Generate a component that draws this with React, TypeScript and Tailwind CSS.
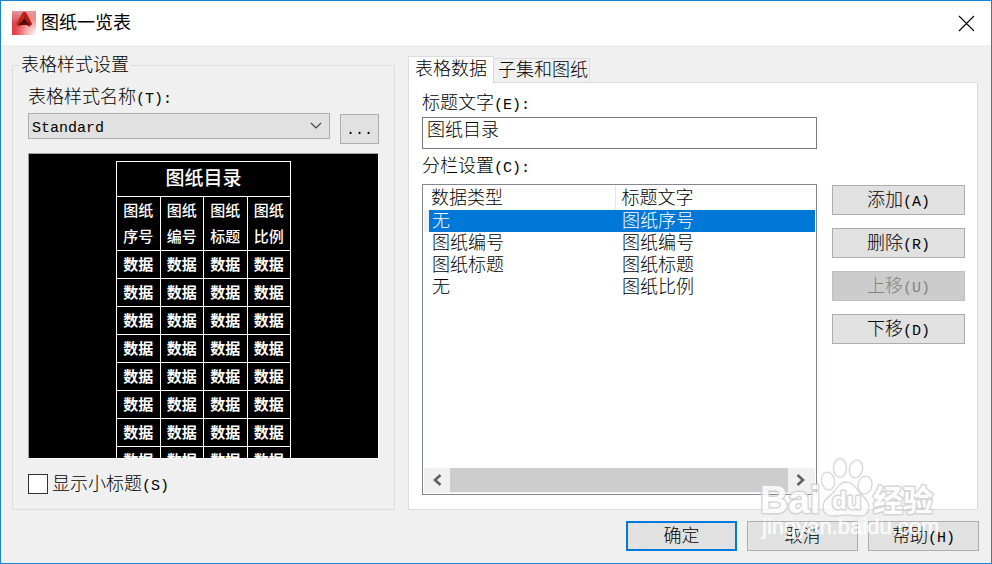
import { useState } from "react";
import clsx from "clsx";

const rows = [
  { id: 1, type: "无", title: "图纸序号" },
  { id: 2, type: "图纸编号", title: "图纸编号" },
  { id: 3, type: "图纸标题", title: "图纸标题" },
  { id: 4, type: "无", title: "图纸比例" },
];

const previewHeads = ["序号", "编号", "标题", "比例"];

const sideButtons = [
  { text: "添加", hotkey: "(A)", disabled: false },
  { text: "删除", hotkey: "(R)", disabled: false },
  { text: "上移", hotkey: "(U)", disabled: true },
  { text: "下移", hotkey: "(D)", disabled: false },
];

function Mono({ children }: { children: string }) {
  return <span className="font-['Liberation_Mono',monospace] text-[15px] font-normal leading-none">{children}</span>;
}

function AppIcon() {
  return (
    <svg width="24" height="24" viewBox="0 0 24 24" aria-hidden="true">
      <defs>
        <linearGradient id="tile" x1="0.1" y1="0" x2="0" y2="1">
          <stop offset="0" stopColor="#e59a9c" />
          <stop offset="0.5" stopColor="#d9474c" />
          <stop offset="1" stopColor="#e8383f" />
        </linearGradient>
        <radialGradient id="glow" cx="1" cy="0.95" r="0.95">
          <stop offset="0" stopColor="#fff" />
          <stop offset="0.5" stopColor="#fbc9c9" stopOpacity="0.7" />
          <stop offset="1" stopColor="#f08080" stopOpacity="0" />
        </radialGradient>
      </defs>
      <rect width="24" height="24" fill="url(#tile)" />
      <rect width="24" height="24" fill="url(#glow)" />
      <path d="M11 1h2.500l6.500 12-2.500 2.500-3-1.500h-5l-3 1.500L4.500 13z" fill="#9c1711" />
      <path d="M11 1h2.500l-1.500 7-4 4-1.500 3L4.500 13z" fill="#c5271b" />
      <path d="M13.500 1L20 13l-2.500 2.500L12 8z" fill="#b01c15" />
      <path d="M12 7l3.500 5h-6z" fill="#3e0807" />
      <path d="M8 11.500h8l1.500 2.500H6.500z" fill="#5c0b0a" />
    </svg>
  );
}

function TitleBar() {
  return (
    <header className="flex h-11 items-center bg-white pl-[11px] pr-4">
      <AppIcon />
      <h1 className="ml-[5px] text-lg font-normal leading-6">图纸一览表</h1>
      <button type="button" aria-label="关闭" className="ml-auto">
        <svg width="17" height="17" viewBox="0 0 17 17" fill="none" stroke="#000" strokeWidth="1.1">
          <path d="M1 1l15 15M16 1L1 16" />
        </svg>
      </button>
    </header>
  );
}

function Preview() {
  return (
    <div className="mt-[9px] flex h-[306px] justify-center overflow-hidden border border-b-white border-l-[#a0a0a0] border-r-white border-t-[#a0a0a0] bg-black pt-[7px]">
      <table className="h-fit w-[175px] table-fixed border-collapse text-center font-medium text-white [&_td]:border [&_td]:border-white [&_td]:p-0 [&_th]:border [&_th]:border-white [&_th]:p-0">
        <thead>
          <tr className="h-[35px]">
            <th colSpan={4} className="text-[19px] font-medium leading-6">
              图纸目录
            </th>
          </tr>
          <tr className="h-[54px]">
            {previewHeads.map((head) => (
              <th key={head} className="text-[15px] font-medium leading-[26px]">
                图纸
                <br />
                {head}
              </th>
            ))}
          </tr>
        </thead>
        <tbody>
          {Array.from({ length: 8 }, (_, i) => (
            <tr key={i} className="h-7">
              {previewHeads.map((head) => (
                <td key={head} className="text-[15px] font-bold leading-6">
                  数据
                </td>
              ))}
            </tr>
          ))}
        </tbody>
      </table>
    </div>
  );
}

function StyleSettings() {
  return (
    <fieldset className="w-[383px] shrink-0 border border-[#dcdcdc] px-[15px] pb-[13px]">
      <legend className="-ml-[9px] h-6 px-[2px] leading-6">表格样式设置</legend>
      <label htmlFor="style-name" className="mt-2 block h-6 leading-6">
        表格样式名称<Mono>(T):</Mono>
      </label>
      <div className="mt-1 flex items-start gap-[10px]">
        <div className="relative flex-1">
          <select
            id="style-name"
            className="block h-[26px] w-full appearance-none border border-[#adadad] bg-[#e1e1e1] pl-[3px] pt-[3px] font-['Liberation_Mono',monospace] text-[15px] font-normal"
          >
            <option>Standard</option>
          </select>
          <svg
            className="pointer-events-none absolute right-2 top-[9px]"
            width="12"
            height="8"
            viewBox="0 0 12 8"
            fill="none"
            stroke="#444"
            strokeWidth="1.2"
          >
            <path d="M1 1l5 5 5-5" />
          </svg>
        </div>
        <button
          type="button"
          className="mt-px h-[30px] w-[39px] border border-[#adadad] bg-[#e1e1e1] pt-1 font-['Liberation_Mono',monospace] text-[15px] font-normal"
        >
          ...
        </button>
      </div>
      <Preview />
      <label className="mt-[13px] flex h-6 items-center gap-1 leading-6">
        <input type="checkbox" className="size-5 appearance-none border border-[#333] bg-white" />
        <span className="h-6">
          显示小标题<Mono>(S)</Mono>
        </span>
      </label>
    </fieldset>
  );
}

function ColumnList() {
  const [selected, setSelected] = useState(1);

  return (
    <div className="flex flex-1 flex-col border border-[#828790] p-px">
      <table className="w-full table-fixed border-collapse text-left">
        <thead>
          <tr className="h-6">
            <th className="w-[5px] p-0" />
            <th className="w-[186px] border-r border-[#e5e5e5] p-0 pl-[2px] font-light leading-[22px]">数据类型</th>
            <th className="p-0 pl-[6px] font-light leading-[22px]">标题文字</th>
          </tr>
        </thead>
        <tbody>
          {rows.map((row) => (
            <tr key={row.id} onClick={() => setSelected(row.id)} className="h-[22px] leading-[22px]">
              <td className={clsx("p-0", selected === row.id && "bg-[#f0f0f0]")} />
              <td className={clsx("p-0 pl-[3px]", selected === row.id && "bg-[#0078d7] text-white")}>{row.type}</td>
              <td className={clsx("p-0 pl-[7px]", selected === row.id && "bg-[#0078d7] text-white")}>{row.title}</td>
            </tr>
          ))}
        </tbody>
      </table>
      <div className="mt-auto flex h-[25px] bg-[#f0f0f0] pb-px pr-px">
        <button type="button" aria-label="向左滚动" className="flex w-[26px] items-center justify-center">
          <svg width="10" height="12" viewBox="0 0 10 12" fill="none" stroke="#606060" strokeWidth="2.6">
            <path d="M8.500 1L3 6l5.500 5" />
          </svg>
        </button>
        <div className="flex-1 bg-[#cdcdcd]" />
        <button type="button" aria-label="向右滚动" className="flex w-[26px] items-center justify-center">
          <svg width="10" height="12" viewBox="0 0 10 12" fill="none" stroke="#606060" strokeWidth="2.6">
            <path d="M1.500 1L7 6l-5.500 5" />
          </svg>
        </button>
      </div>
    </div>
  );
}

function DataPanel() {
  return (
    <section className="flex flex-1 flex-col pt-[3px]">
      <div role="tablist" className="flex items-end">
        <button
          type="button"
          role="tab"
          aria-selected="true"
          className="relative z-10 h-[27px] border border-b-0 border-[#dcdcdc] bg-white px-[6px] pb-[2px] leading-[22px]"
        >
          表格数据
        </button>
        <button
          type="button"
          role="tab"
          aria-selected="false"
          className="h-[25px] border border-l-0 border-[#dcdcdc] bg-[#f0f0f0] pb-[2px] pl-1 pr-px leading-[22px]"
        >
          子集和图纸
        </button>
      </div>
      <div role="tabpanel" className="-mt-px flex flex-1 gap-[15px] border border-[#dcdcdc] bg-white pb-[14px] pl-[13px] pr-3 pt-2">
        <div className="flex flex-1 flex-col">
          <label htmlFor="title-text" className="h-6 leading-6">
            标题文字<Mono>(E):</Mono>
          </label>
          <input
            id="title-text"
            defaultValue="图纸目录"
            className="mt-[2px] h-8 border border-[#7a7a7a] bg-white pb-[10px] pl-1 leading-5"
          />
          <h2 className="mb-[6px] mt-[5px] h-6 leading-6">
            分栏设置<Mono>(C):</Mono>
          </h2>
          <ColumnList />
        </div>
        <div className="flex w-[133px] flex-col gap-[13px] pt-[94px]">
          {sideButtons.map((button) => (
            <button
              key={button.text}
              type="button"
              disabled={button.disabled}
              className="h-[30px] border border-[#adadad] bg-[#e1e1e1] leading-6 disabled:border-[#bfbfbf] disabled:bg-[#cccccc] disabled:text-[#838383]"
            >
              {button.text}
              <Mono>{button.hotkey}</Mono>
            </button>
          ))}
        </div>
      </div>
    </section>
  );
}

function Watermark() {
  return (
    <svg
      className="pointer-events-none absolute bottom-[14px] right-[50px] z-20"
      width="182"
      height="94"
      viewBox="0 0 182 94"
      fontFamily="'Liberation Sans', 'Noto Sans CJK SC', sans-serif"
    >
      <g fill="#fff" fillOpacity="0.7" stroke="#d6d6d6" strokeWidth="1.3">
        <ellipse cx="81" cy="13" rx="6.500" ry="9.500" />
        <ellipse cx="97" cy="14" rx="6.500" ry="9" transform="rotate(12 97 14)" />
        <ellipse cx="69" cy="26" rx="6.500" ry="9" transform="rotate(-12 69 26)" />
        <ellipse cx="106" cy="30" rx="7" ry="9" transform="rotate(10 106 30)" />
        <path d="M87 27c7 0 10 6 14 11 4 4 9 8 9 14 0 7-5 9-10 9-5 0-8-1-13-1s-8 1-13 1c-6 0-10-3-10-9s4-9 9-13c5-5 7-12 14-12z" />
      </g>
      <g fill="#fff" stroke="#d0d0d0" strokeWidth="3" strokeLinejoin="round" paintOrder="stroke" opacity="0.85">
        <text x="1" y="58" fontSize="39" fontWeight="bold">Bai</text>
        <text x="73" y="54" fontSize="24" fontWeight="bold">du</text>
        <text x="114" y="56" fontSize="30" fontWeight="bold">经验</text>
      </g>
      <text x="3" y="79" fontSize="22" fill="#fff" fillOpacity="0.85" stroke="#fff" strokeOpacity="0.6" strokeWidth="0.6">
        jingyan.baidu.com
      </text>
    </svg>
  );
}

export default function App() {
  const actionButton = "h-[30px] w-[111px] bg-[#e1e1e1] leading-6";

  return (
    <main className="relative flex min-h-screen flex-col border border-[#1883d7] bg-[#f0f0f0] font-['Liberation_Sans','Noto_Sans_CJK_SC',sans-serif] text-lg font-light text-black">
      <TitleBar />
      <div className="flex flex-1 gap-[13px] pl-[11px] pr-[13px] pt-2">
        <StyleSettings />
        <DataPanel />
      </div>
      <footer className="flex justify-end gap-[10px] pb-3 pr-3 pt-[11px]">
        <button type="button" className={clsx(actionButton, "border-2 border-[#0078d7]")}>
          确定
        </button>
        <button type="button" className={clsx(actionButton, "border border-[#adadad]")}>
          取消
        </button>
        <button type="button" className={clsx(actionButton, "border border-[#adadad]")}>
          帮助<Mono>(H)</Mono>
        </button>
      </footer>
      <Watermark />
    </main>
  );
}
